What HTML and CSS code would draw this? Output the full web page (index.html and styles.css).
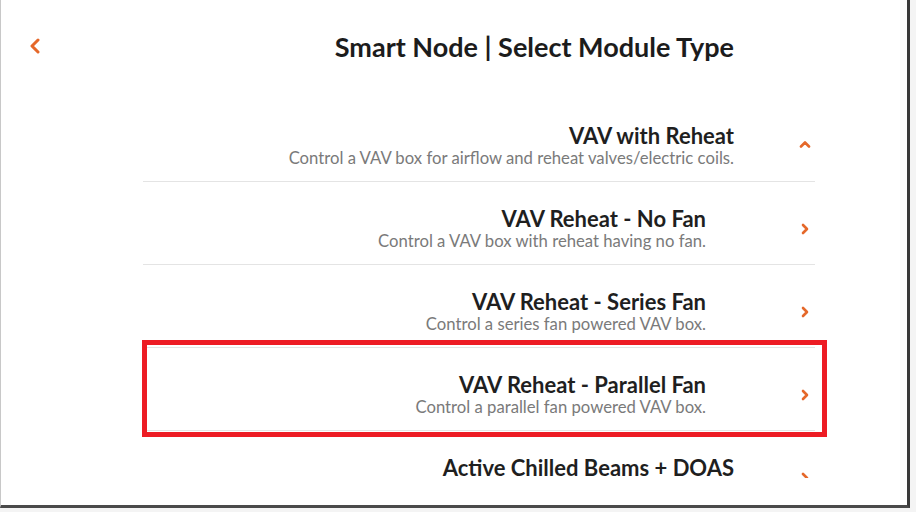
FILE: index.html
```html
<!DOCTYPE html>
<html lang="en">
<head>
    <meta charset="UTF-8">
    <meta name="viewport" content="width=device-width, initial-scale=1.0">
    <title>Smart Node | Select Module Type</title>
    <link rel="stylesheet" href="styles.css">
</head>
<body>
    <div class="screen">
        <div class="header">
            <button class="back" aria-label="Back">
                <svg width="12" height="16" viewBox="0 0 12 16"><path d="M9 2 L3 8 L9 14" fill="none" stroke="#e5682a" stroke-width="3" stroke-linecap="round" stroke-linejoin="round"/></svg>
            </button>
            <h1 class="title">Smart Node | Select Module Type</h1>
        </div>

        <div class="list">
            <div class="row">
                <div class="text">
                    <div class="name">VAV with Reheat</div>
                    <div class="desc">Control a VAV box for airflow and reheat valves/electric coils.</div>
                </div>
                <svg class="chev" width="12" height="8" viewBox="0 0 12 8"><path d="M2 6.5 L6 2.5 L10 6.5" fill="none" stroke="#e5682a" stroke-width="2.6" stroke-linecap="round" stroke-linejoin="round"/></svg>
            </div>
            <div class="row">
                <div class="text sub">
                    <div class="name">VAV Reheat - No Fan</div>
                    <div class="desc">Control a VAV box with reheat having no fan.</div>
                </div>
                <svg class="chev" width="12" height="12" viewBox="0 0 12 12"><path d="M4 2 L8 6 L4 10" fill="none" stroke="#e5682a" stroke-width="2.6" stroke-linecap="round" stroke-linejoin="round"/></svg>
            </div>
            <div class="row">
                <div class="text sub">
                    <div class="name">VAV Reheat - Series Fan</div>
                    <div class="desc">Control a series fan powered VAV box.</div>
                </div>
                <svg class="chev" width="12" height="12" viewBox="0 0 12 12"><path d="M4 2 L8 6 L4 10" fill="none" stroke="#e5682a" stroke-width="2.6" stroke-linecap="round" stroke-linejoin="round"/></svg>
            </div>
            <div class="row">
                <div class="text sub">
                    <div class="name">VAV Reheat - Parallel Fan</div>
                    <div class="desc">Control a parallel fan powered VAV box.</div>
                </div>
                <svg class="chev" width="12" height="12" viewBox="0 0 12 12"><path d="M4 2 L8 6 L4 10" fill="none" stroke="#e5682a" stroke-width="2.6" stroke-linecap="round" stroke-linejoin="round"/></svg>
            </div>
            <div class="row">
                <div class="text">
                    <div class="name">Active Chilled Beams + DOAS</div>
                </div>
                <!-- only the top of this chevron is still on screen -->
                <svg class="chev" width="12" height="6" viewBox="0 0 12 6"><path d="M4 2 L8 6 L4 10" fill="none" stroke="#e5682a" stroke-width="2.6" stroke-linecap="round" stroke-linejoin="round"/></svg>
            </div>
        </div>

        <div class="highlight"></div>
    </div>
</body>
</html>
```

FILE: styles.css
```css
body {
    margin: 0;
    background-color: #f4f4f4;
    font-family: Lato, "Open Sans", sans-serif;
    color: #1f1f1f;
}

.screen {
    position: relative;
    width: 906px;
    height: 505px;
    background-color: #fff;
    border-left: 1px solid #c8c8c8;
    border-right: 3px solid #3a3a3a;
    border-bottom: 3px solid #4a4a4a;
    overflow: hidden;
}

.header {
    display: flex;
    align-items: center;
    width: 733px;
    height: 92px;
    padding-left: 28px;
    box-sizing: border-box;
}

.back {
    display: flex;
    background: none;
    border: none;
    padding: 0;
    cursor: pointer;
}

.title {
    margin: 0 0 0 auto;
    font-size: 27px;
    font-weight: 700;
    color: #1c1c1c;
}

.list {
    margin-top: 7px;
    margin-left: 142px;
    width: 672px;
    height: 388px;
    overflow: hidden;
}

.row {
    display: flex;
    align-items: flex-start;
    height: 83px;
    padding-top: 24px;
    box-sizing: border-box;
    border-bottom: 1px solid #e4e4e4;
}

.text {
    width: 591px;
    text-align: right;
    box-sizing: border-box;
}

.text.sub {
    padding-right: 28px;
}

.name {
    font-size: 22px;
    line-height: 25px;
    font-weight: 700;
    color: #1f1f1f;
}

.desc {
    font-size: 16.7px;
    line-height: 20px;
    color: #7a7a7a;
}

.chev {
    margin-left: 65px;
    margin-top: 17px;
}

.highlight {
    position: absolute;
    left: 141px;
    top: 340px;
    width: 675px;
    height: 87px;
    border: 5px solid #ed1c24;
}
```
